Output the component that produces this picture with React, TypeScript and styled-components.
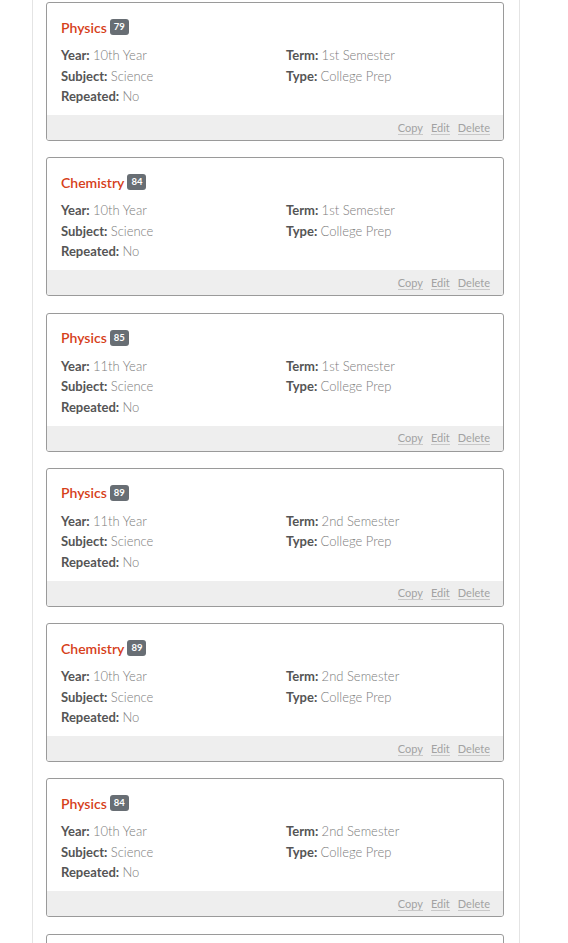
import React from "react";
import styled, { createGlobalStyle } from "styled-components";

const Global = createGlobalStyle`
  html, body { margin: 0; padding: 0; background: #ffffff; }
  body { font-family: "Source Sans Pro", Lato, "Open Sans", sans-serif; }
`;

const Page = styled.div`
  width: 568px;
  height: 943px;
  overflow: hidden;
`;

const Column = styled.div`
  margin-left: 32px;
  width: 460px;
  min-height: 943px;
  border-left: 1px solid #e4e4e4;
  border-right: 1px solid #e4e4e4;
  padding: 2px 13px 0 13px;
  display: flex;
  flex-direction: column;
  gap: 16.3px;
  box-sizing: content-box;
`;

const Card = styled.div`
  width: 456px;
  border: 1px solid #9a9a9a;
  border-radius: 3px;
  display: flex;
  flex-direction: column;
  overflow: hidden;
  flex-shrink: 0;
`;

const Body = styled.div`
  padding: 14px 14px 7px 14px;
  height: 112px;
  box-sizing: border-box;
`;

const Title = styled.div`
  display: flex;
  align-items: center;
  gap: 3px;
  height: 20px;
  margin-bottom: 8px;
`;

const CourseName = styled.span`
  color: #d6401a;
  font-size: 14px;
  font-weight: 600;
`;

const Badge = styled.span`
  background: #686e74;
  color: #ffffff;
  font-size: 9.5px;
  font-weight: 700;
  border-radius: 3px;
  padding: 0 4px;
  height: 16px;
  line-height: 16px;
  display: inline-block;
`;

const Fields = styled.div`
  display: grid;
  grid-template-columns: 225px 1fr;
  font-size: 13px;
  line-height: 20.5px;
`;

const Field = styled.div`
  white-space: nowrap;
`;

const Label = styled.span`
  color: #555555;
  font-weight: 700;
`;

const Value = styled.span`
  color: #7c7c7c;
  font-weight: 300;
`;

const Footer = styled.div`
  height: 25px;
  background: #eeeeee;
  display: flex;
  justify-content: flex-end;
  align-items: center;
  gap: 8px;
  padding-right: 13px;
`;

const Action = styled.a`
  font-size: 11px;
  color: #a2a2a2;
  text-decoration: none;
  border-bottom: 1px solid #c8c8c8;
  line-height: 13px;
  cursor: pointer;
`;

type Course = {
  name: string;
  grade: number;
  year: string;
  term: string;
};

const courses: Course[] = [
  { name: "Physics", grade: 79, year: "10th Year", term: "1st Semester" },
  { name: "Chemistry", grade: 84, year: "10th Year", term: "1st Semester" },
  { name: "Physics", grade: 85, year: "11th Year", term: "1st Semester" },
  { name: "Physics", grade: 89, year: "11th Year", term: "2nd Semester" },
  { name: "Chemistry", grade: 89, year: "10th Year", term: "2nd Semester" },
  { name: "Physics", grade: 84, year: "10th Year", term: "2nd Semester" },
  { name: "Chemistry", grade: 91, year: "11th Year", term: "2nd Semester" },
];

const CourseCard = ({ c }: { c: Course }) => (
  <Card>
    <Body>
      <Title>
        <CourseName>{c.name}</CourseName>
        <Badge>{c.grade}</Badge>
      </Title>
      <Fields>
        <Field>
          <Label>Year:</Label> <Value>{c.year}</Value>
        </Field>
        <Field>
          <Label>Term:</Label> <Value>{c.term}</Value>
        </Field>
        <Field>
          <Label>Subject:</Label> <Value>Science</Value>
        </Field>
        <Field>
          <Label>Type:</Label> <Value>College Prep</Value>
        </Field>
        <Field>
          <Label>Repeated:</Label> <Value>No</Value>
        </Field>
      </Fields>
    </Body>
    <Footer>
      <Action>Copy</Action>
      <Action>Edit</Action>
      <Action>Delete</Action>
    </Footer>
  </Card>
);

export default function App() {
  return (
    <Page>
      <Global />
      <Column>
        {courses.map((c, i) => (
          <CourseCard key={i} c={c} />
        ))}
      </Column>
    </Page>
  );
}
